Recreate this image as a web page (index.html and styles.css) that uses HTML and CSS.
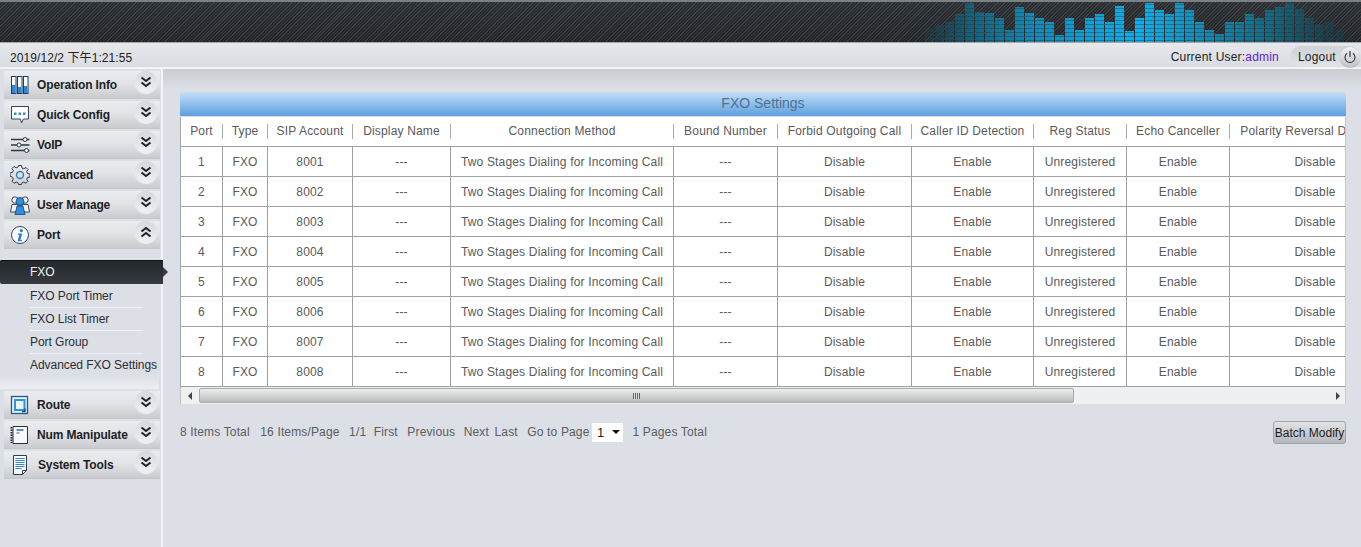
FILE: index.html
```html
<!DOCTYPE html>
<html lang="en">
<head>
<meta charset="utf-8">
<title>FXO Settings</title>
<link rel="stylesheet" href="styles.css">
</head>
<body>
<svg class="defs" aria-hidden="true">
  <symbol id="chev-down" viewBox="0 0 22 22"><path d="M6.500 6.500 11 10l4.500-3.500M6.500 11.500 11 15l4.500-3.500" fill="none" stroke="#222" stroke-width="2"/></symbol>
  <symbol id="chev-up" viewBox="0 0 22 22"><path d="M6.500 10.500 11 7l4.500 3.500M6.500 15.500 11 12l4.500 3.500" fill="none" stroke="#222" stroke-width="2"/></symbol>
</svg>
<header class="topbar">
  <svg class="eq" width="460" height="40" viewBox="901 2 460 40" aria-hidden="true">
    <defs>
      <linearGradient id="eqfill" gradientUnits="userSpaceOnUse" x1="915" y1="0" x2="1361" y2="0">
        <stop offset="0" stop-color="#12404f" stop-opacity=".2"/>
        <stop offset=".12" stop-color="#155f78"/>
        <stop offset=".26" stop-color="#1588b4"/>
        <stop offset=".5" stop-color="#10aeea"/>
        <stop offset=".62" stop-color="#1490bc"/>
        <stop offset=".8" stop-color="#156880"/>
        <stop offset=".95" stop-color="#154050" stop-opacity=".6"/>
        <stop offset="1" stop-color="#154050" stop-opacity=".1"/>
      </linearGradient>
      <pattern id="eqlines" width="4" height="4" patternUnits="userSpaceOnUse" y="1"><rect width="4" height="3" fill="#fff"/><rect y="3" width="4" height="1" fill="#999"/></pattern>
      <mask id="eqmask" maskUnits="userSpaceOnUse" x="901" y="2" width="460" height="40"><rect x="901" y="2" width="460" height="40" fill="url(#eqlines)"/></mask>
    </defs>
    <path mask="url(#eqmask)" fill="url(#eqfill)" d="M925 28h9v14h-9zM935 25h9v17h-9zM945 22h9v20h-9zM955 14h9v28h-9zM965 3h9v39h-9zM975 12h9v30h-9zM985 13h9v29h-9zM995 18h9v24h-9zM1005 30h9v12h-9zM1015 7h9v35h-9zM1025 13h9v29h-9zM1035 18h9v24h-9zM1045 22h9v20h-9zM1055 35h9v7h-9zM1065 18h9v24h-9zM1075 30h9v12h-9zM1085 18h9v24h-9zM1095 14h9v28h-9zM1105 22h9v20h-9zM1115 6h9v36h-9zM1125 31h9v11h-9zM1135 18h9v24h-9zM1145 3h9v39h-9zM1155 10h9v32h-9zM1165 14h9v28h-9zM1175 3h9v39h-9zM1185 10h9v32h-9zM1195 22h9v20h-9zM1205 30h9v12h-9zM1215 34h9v8h-9zM1225 22h9v20h-9zM1235 22h9v20h-9zM1245 14h9v28h-9zM1255 18h9v24h-9zM1265 10h9v32h-9zM1275 7h9v35h-9zM1285 3h9v39h-9zM1295 9h9v33h-9zM1305 18h9v24h-9zM1315 24h9v18h-9zM1325 22h9v20h-9zM1335 30h9v12h-9z"/>
  </svg>
</header>
<div class="statusbar">
  <span class="clock">2019/12/2 下午1:21:55</span>
  <div class="session">
    <span class="user">Current User:<span class="username">admin</span></span>
    <button class="logout" type="button">Logout
      <span class="power"><svg width="14" height="14" viewBox="0 0 14 14" aria-hidden="true"><path d="M4.200 3.300a5 5 0 1 0 5.600 0" fill="none" stroke="#333" stroke-width="1.100"/><path d="M7 1v6" stroke="#333" stroke-width="1.200"/></svg></span>
    </button>
  </div>
</div>
<div class="layout">
  <aside class="sidebar">
    <div class="nav-item">
      <svg class="nav-icon" width="20" height="20" viewBox="0 0 20 20" aria-hidden="true"><g fill="#fff" stroke="#1c3f66" stroke-width="1"><rect x="1.500" y="1.500" width="4.500" height="17"/><rect x="7.500" y="1.500" width="4.500" height="17"/><rect x="13.500" y="1.500" width="4.500" height="17"/></g><g fill="#2f86d6"><rect x="2" y="10" width="3.500" height="8"/><rect x="8" y="12" width="3.500" height="6"/><rect x="14" y="11" width="3.500" height="7"/></g></svg>
      <span class="nav-label">Operation Info</span><span class="chev"><svg width="22" height="22"><use href="#chev-down"/></svg></span>
    </div>
    <div class="nav-item">
      <svg class="nav-icon" width="20" height="20" viewBox="0 0 20 20" aria-hidden="true"><path d="M1.500 1.500h17v12.500h-5l-2 4-1-4h-9z" fill="#fff" stroke="#30475f"/><path d="M4 7.500h2.500v2.500H4zM8.500 7.500H11v2.500H8.500zM13 7.500h2.500v2.500H13z" fill="#3a8ad0"/></svg>
      <span class="nav-label">Quick Config</span><span class="chev"><svg width="22" height="22"><use href="#chev-down"/></svg></span>
    </div>
    <div class="nav-item">
      <svg class="nav-icon" width="20" height="20" viewBox="0 0 20 20" aria-hidden="true"><g stroke="#2d3a48" stroke-width="1.500" fill="none"><path d="M1 4.500h12M1 10h6M1 15.500h14M17 4.500h2.500M11 10h8.500M18 15.500h1.500"/></g><g fill="#f4f6f8" stroke="#2d3a48"><circle cx="15" cy="4.500" r="2"/><circle cx="9" cy="10" r="2"/><circle cx="16.500" cy="15.500" r="2"/></g></svg>
      <span class="nav-label">VoIP</span><span class="chev"><svg width="22" height="22"><use href="#chev-down"/></svg></span>
    </div>
    <div class="nav-item">
      <svg class="nav-icon" width="20" height="20" viewBox="0 0 20 20" aria-hidden="true"><path d="M8.500 1h3l.5 2.500 1.800.8L16 3l2 2-1.300 2.200.8 1.800 2.500.5v3l-2.500.5-.8 1.800L18 16.800l-2 2-2.200-1.300-1.800.8-.5 1.700h-3L8 18.300l-1.800-.8L4 18.800l-2-2 1.300-2.200-.8-1.800L0 11.500v-3l2.500-.5.8-1.800L2 4l2-2 2.200 1.300L8 2.500z" transform="translate(0 -.5)" fill="none" stroke="#2c3a48"/><circle cx="10" cy="10" r="3.500" fill="none" stroke="#2f7fb8" stroke-width="1.400"/></svg>
      <span class="nav-label">Advanced</span><span class="chev"><svg width="22" height="22"><use href="#chev-down"/></svg></span>
    </div>
    <div class="nav-item">
      <svg class="nav-icon" width="20" height="20" viewBox="0 0 20 20" aria-hidden="true"><g fill="#f2f4f6" stroke="#25384c" stroke-width=".9"><circle cx="5" cy="5" r="3.200"/><circle cx="15" cy="5" r="3.200"/><path d="M.5 17 2 9.500h6L9.500 17zM10.500 17 12 9.500h6l1.500 7.500z"/></g><circle cx="10" cy="6.500" r="4" fill="#2c8fe0" stroke="#173e66" stroke-width=".8"/><path d="M5 19.500 7 11h6l2 8.500z" fill="#2c8fe0" stroke="#173e66" stroke-width=".8"/></svg>
      <span class="nav-label">User Manage</span><span class="chev"><svg width="22" height="22"><use href="#chev-down"/></svg></span>
    </div>
    <div class="nav-item">
      <svg class="nav-icon" width="20" height="20" viewBox="0 0 20 20" aria-hidden="true"><circle cx="10" cy="10" r="8.500" fill="#fbfcfd" stroke="#31465c"/><circle cx="11.300" cy="5.600" r="1.700" fill="#2f7fc8"/><path d="M8 8.500h4.200l-1.700 6.500h1.600l-.4 1.200H7.600l1.700-6.500H7.700z" fill="#2f7fc8"/></svg>
      <span class="nav-label">Port</span><span class="chev"><svg width="22" height="22"><use href="#chev-up"/></svg></span>
    </div>
    <ul class="subnav">
      <li class="sub-active">FXO</li>
      <li>FXO Port Timer</li>
      <li>FXO List Timer</li>
      <li>Port Group</li>
      <li>Advanced FXO Settings</li>
    </ul>
    <div class="nav-item">
      <svg class="nav-icon" width="20" height="20" viewBox="0 0 20 20" aria-hidden="true"><rect x="1.500" y="1.500" width="16" height="17" fill="#e9f2fa" stroke="#1d5c8c" stroke-width="1.300"/><path d="M5 5h9.500v10H5z" fill="none" stroke="#2f95d8" stroke-width="2"/><path d="M15 13.500v3h-3" fill="none" stroke="#12507f" stroke-width="1.400"/></svg>
      <span class="nav-label">Route</span><span class="chev"><svg width="22" height="22"><use href="#chev-down"/></svg></span>
    </div>
    <div class="nav-item">
      <svg class="nav-icon" width="20" height="20" viewBox="0 0 20 20" aria-hidden="true"><path d="M3 1.500h14.500v17H3z" fill="#f6f8fa" stroke="#26313c"/><path d="M1.500 2v16" stroke="#26313c" stroke-width="2" stroke-dasharray="1.500 1"/><path d="M6.500 5h7" stroke="#2a6fa8" stroke-width="1.500"/><path d="M6.500 8h3" stroke="#2a6fa8"/></svg>
      <span class="nav-label">Num Manipulate</span><span class="chev"><svg width="22" height="22"><use href="#chev-down"/></svg></span>
    </div>
    <div class="nav-item">
      <svg class="nav-icon" width="20" height="20" viewBox="0 0 20 20" aria-hidden="true"><path d="M3.500 .5h13v15l-4 4h-9z" fill="#f7fafc" stroke="#2a3f55"/><path d="M12.500 19.500v-4h4" fill="none" stroke="#2a3f55"/><path d="M5.500 3.500h9M5.500 5.500h9M5.500 7.500h9M5.500 9.500h9M5.500 11.500h9M5.500 13.500h6" stroke="#3b84c4"/></svg>
      <span class="nav-label nav-label-shift">System Tools</span><span class="chev"><svg width="22" height="22"><use href="#chev-down"/></svg></span>
    </div>
  </aside>
  <main class="content">
    <h1 class="panel-title">FXO Settings</h1>
    <div class="table-view">
      <table class="grid">
        <thead>
          <tr>
            <th class="c1"><span>Port</span></th><th class="c2"><span>Type</span></th><th class="c3"><span>SIP Account</span></th><th class="c4"><span>Display Name</span></th><th class="c5"><span>Connection Method</span></th><th class="c6"><span>Bound Number</span></th><th class="c7"><span>Forbid Outgoing Call</span></th><th class="c8"><span>Caller ID Detection</span></th><th class="c9"><span>Reg Status</span></th><th class="c10"><span>Echo Canceller</span></th><th class="c11"><span>Polarity Reversal Detection</span></th>
          </tr>
        </thead>
        <tbody>
          <tr><td>1</td><td>FXO</td><td>8001</td><td>---</td><td>Two Stages Dialing for Incoming Call</td><td>---</td><td>Disable</td><td>Enable</td><td>Unregistered</td><td>Enable</td><td>Disable</td></tr>
          <tr><td>2</td><td>FXO</td><td>8002</td><td>---</td><td>Two Stages Dialing for Incoming Call</td><td>---</td><td>Disable</td><td>Enable</td><td>Unregistered</td><td>Enable</td><td>Disable</td></tr>
          <tr><td>3</td><td>FXO</td><td>8003</td><td>---</td><td>Two Stages Dialing for Incoming Call</td><td>---</td><td>Disable</td><td>Enable</td><td>Unregistered</td><td>Enable</td><td>Disable</td></tr>
          <tr><td>4</td><td>FXO</td><td>8004</td><td>---</td><td>Two Stages Dialing for Incoming Call</td><td>---</td><td>Disable</td><td>Enable</td><td>Unregistered</td><td>Enable</td><td>Disable</td></tr>
          <tr><td>5</td><td>FXO</td><td>8005</td><td>---</td><td>Two Stages Dialing for Incoming Call</td><td>---</td><td>Disable</td><td>Enable</td><td>Unregistered</td><td>Enable</td><td>Disable</td></tr>
          <tr><td>6</td><td>FXO</td><td>8006</td><td>---</td><td>Two Stages Dialing for Incoming Call</td><td>---</td><td>Disable</td><td>Enable</td><td>Unregistered</td><td>Enable</td><td>Disable</td></tr>
          <tr><td>7</td><td>FXO</td><td>8007</td><td>---</td><td>Two Stages Dialing for Incoming Call</td><td>---</td><td>Disable</td><td>Enable</td><td>Unregistered</td><td>Enable</td><td>Disable</td></tr>
          <tr><td>8</td><td>FXO</td><td>8008</td><td>---</td><td>Two Stages Dialing for Incoming Call</td><td>---</td><td>Disable</td><td>Enable</td><td>Unregistered</td><td>Enable</td><td>Disable</td></tr>
        </tbody>
      </table>
    </div>
    <div class="hscroll">
      <span class="arrow-left"></span>
      <span class="thumb"><span class="grip"></span></span>
      <span class="arrow-right"></span>
    </div>
    <div class="pager">
      <div class="pager-info">
        <span class="wide">8 Items Total</span><span>16 Items/Page</span><span class="ratio">1/1</span><span>First</span><span class="prev">Previous</span><span class="tight">Next</span><span>Last</span>
        <span class="go-label">Go to Page</span>
        <span class="page-select">1<i class="caret"></i></span>
        <span>1 Pages Total</span>
      </div>
      <button class="batch" type="button">Batch Modify</button>
    </div>
  </main>
</div>
</body>
</html>
```
FILE: styles.css
```css
* { box-sizing: border-box; }
html, body { margin: 0; height: 100%; }
body {
  width: 1361px;
  height: 547px;
  overflow: hidden;
  background: #dcdfe6;
  font: 12px "Liberation Sans", Arial, "Noto Sans CJK SC", sans-serif;
  color: #333;
}
.defs { display: none; }

.topbar {
  height: 43px;
  display: flex;
  justify-content: flex-end;
  align-items: flex-start;
  border-top: 2px solid #7a8084;
  border-bottom: 1px solid #a4a8ab;
  background:
    repeating-linear-gradient(135deg, rgba(255,255,255,.07) 0 1px, rgba(0,0,0,.12) 1px 2.4px),
    linear-gradient(#2f3438, #26292c);
}
.eq { display: block; flex: none; }

.statusbar {
  height: 26px;
  padding: 3px 1px 0 10px;
  display: flex;
  justify-content: space-between;
  align-items: center;
  background: linear-gradient(#e6e8eb, #d9dce1);
  border-bottom: 2px solid #f2f3f5;
  color: #222;
}
.clock { letter-spacing: .08px; }
.session { display: flex; align-items: center; gap: 11px; letter-spacing: .2px; }
.username { color: #6a22c8; }
.logout {
  width: 70px;
  height: 21px;
  margin: 0;
  padding: 0 0 0 8px;
  display: flex;
  align-items: center;
  justify-content: space-between;
  border: 0;
  border-radius: 11px;
  background: linear-gradient(#d0d3d7, #e0e2e6);
  font: inherit;
  letter-spacing: .2px;
  color: #222;
}
.power {
  width: 20px;
  height: 20px;
  border-radius: 50%;
  display: flex;
  align-items: center;
  justify-content: center;
  background: linear-gradient(#f2f3f5, #bfc3c8);
  box-shadow: 0 1px 1px rgba(0,0,0,.25);
}

.layout { display: flex; height: 478px; }

.sidebar {
  width: 163px;
  flex: none;
  padding-top: 2px;
  border-right: 2px solid #f4f5f7;
  background: #dcdfe6;
}
.nav-item {
  height: 28px;
  margin: 0 1px 2px 4px;
  padding-left: 6px;
  display: flex;
  align-items: center;
  background: linear-gradient(#e9ebed 0, #e2e4e7 45%, #c9cbcf 100%);
  border-bottom: 1px solid #c4c6ca;
}
.nav-icon { flex: none; }
.nav-label {
  margin-left: 7px;
  flex: 1;
  font-weight: bold;
  letter-spacing: -.14px;
  color: #1c1f24;
}
.nav-label-shift { margin-left: 8px; }
.chev {
  width: 22px;
  height: 22px;
  margin: -5px 3px 0 0;
  border-radius: 50%;
  background: linear-gradient(#d6d8dc, #f0f1f3);
  box-shadow: 0 1px 1px rgba(255,255,255,.7);
}
.chev svg { display: block; }

.subnav {
  list-style: none;
  margin: -2px 2px 2px 0;
  padding: 11px 0 11px;
  height: 140px;
  background: linear-gradient(#dcdfe6 90%, #eceef1 100%);
}
.subnav li {
  height: 23px;
  margin-left: 30px;
  margin-right: 16px;
  line-height: 22px;
  letter-spacing: -.05px;
  color: #2b2e33;
  border-bottom: 1px solid #eef0f3;
  white-space: nowrap;
}
.subnav li:last-child { border-bottom: 0; }
.subnav .sub-active {
  position: relative;
  height: 24px;
  width: 163px;
  margin: 0 0 1px;
  padding-left: 30px;
  line-height: 24px;
  color: #f2f2f2;
  border: 0;
  border-radius: 2px 0 0 2px;
  background: linear-gradient(#23282c, #363a3f);
  box-shadow: 0 1px 0 #111 inset;
}
.subnav .sub-active::after {
  content: "";
  position: absolute;
  left: 163px;
  top: 7px;
  border: 5px solid transparent;
  border-left-color: #3a3e44;
}

.content {
  flex: 1;
  min-width: 0;
  padding: 23px 15px 0 17px;
  background: linear-gradient(#c9ccd0 0, #dcdfe6 20px);
}
.panel-title {
  margin: 0;
  height: 24px;
  line-height: 23px;
  text-align: center;
  font-size: 14px;
  font-weight: normal;
  color: #50708f;
  background: linear-gradient(#c6dff5 0, #93c2ec 45%, #5d9fdc 100%);
}
.table-view {
  margin-top: 1px;
  overflow: hidden;
  border-left: 1px solid #a8a8a8;
  border-right: 1px solid #c5c7ca;
}
.grid {
  width: 1219px;
  table-layout: fixed;
  border-collapse: separate;
  border-spacing: 0;
  background: #fff;
  color: #5a5a5a;
  letter-spacing: .17px;
}
.grid th {
  height: 30px;
  padding: 0;
  font-weight: normal;
  text-align: center;
  white-space: nowrap;
  overflow: hidden;
  border-bottom: 1px solid #a0a0a0;
}
.grid th span {
  display: block;
  line-height: 15px;
  border-right: 1px solid #aaa;
}
.grid th:last-child span { border-right: 0; }
.c1 { width: 42px; }
.c2 { width: 45px; }
.c3 { width: 85px; }
.c4 { width: 98px; }
.c5 { width: 223px; }
.c6 { width: 104px; }
.c7 { width: 134px; }
.c8 { width: 122px; }
.c9 { width: 93px; }
.c10 { width: 103px; }
.c11 { width: 170px; }
.grid td {
  height: 30px;
  padding: 0;
  text-align: center;
  white-space: nowrap;
  border-right: 1px solid #a0a0a0;
  border-bottom: 1px solid #a0a0a0;
}
.grid td:last-child { border-right: 0; }

.hscroll {
  height: 17px;
  display: flex;
  align-items: center;
  background: #eef0f1;
  border-left: 1px solid #c0c0c0;
  border-right: 1px solid #c9cbce;
}
.arrow-left, .arrow-right {
  flex: none;
  width: 0;
  height: 0;
  border: 4px solid transparent;
}
.arrow-left { margin: 0 0 0 7px; border-right-color: #444; border-left-width: 0; }
.arrow-right { margin: 0 5px 0 auto; border-left-color: #444; border-right-width: 0; }
.thumb {
  width: 875px;
  height: 15px;
  margin-left: 7px;
  display: flex;
  align-items: center;
  justify-content: center;
  background: linear-gradient(#eceded, #b9bbbd);
  border: 1px solid #a9abad;
  border-radius: 2px;
}
.grip {
  width: 7px;
  height: 6px;
  background: repeating-linear-gradient(90deg, #666 0 1px, #ddd 1px 2px);
}

.pager {
  margin-top: 17px;
  display: flex;
  justify-content: space-between;
  align-items: flex-start;
  color: #5a5d62;
}
.pager-info {
  height: 22px;
  display: flex;
  align-items: center;
  gap: 9.5px;
  letter-spacing: .15px;
}
.wide { margin-right: 1px; }
.ratio { margin-right: -2px; }
.prev { margin-right: -1px; }
.tight { margin-right: -4px; }
.go-label { margin-right: -7px; }
.page-select {
  width: 31px;
  height: 19px;
  padding-left: 5px;
  display: flex;
  align-items: center;
  justify-content: space-between;
  background: #fff;
  color: #222;
  font-size: 13px;
}
.caret {
  margin-right: 3px;
  border: 4px solid transparent;
  border-top-color: #111;
  border-bottom-width: 0;
}
.batch {
  width: 73px;
  height: 23px;
  margin: 0;
  padding: 0;
  font: inherit;
  color: #1c1c1c;
  white-space: nowrap;
  background: linear-gradient(#e2e4e7, #b4b7bb);
  border: 1px solid #9fa2a6;
  border-radius: 3px;
}
```
